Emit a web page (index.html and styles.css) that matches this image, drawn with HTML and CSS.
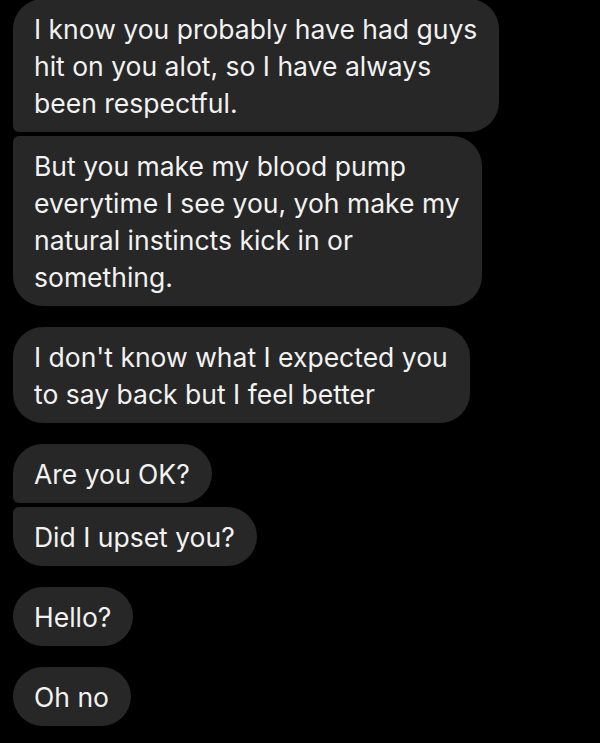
FILE: index.html
```html
<!DOCTYPE html>
<html lang="en">
<head>
    <meta charset="UTF-8">
    <meta name="viewport" content="width=device-width, initial-scale=1.0">
    <title>Messages</title>
    <link rel="stylesheet" href="styles.css">
</head>
<body>

<div class="thread">
    <div class="group first">
        <div class="bubble top">I know you probably have had guys<br>hit on you alot, so I have always<br>been respectful.</div>
        <div class="bubble bottom">But you make my blood pump<br>everytime I see you, yoh make my<br>natural instincts kick in or<br>something.</div>
    </div>

    <div class="group">
        <div class="bubble">I don't know what I expected you<br>to say back but I feel better</div>
    </div>

    <div class="group">
        <div class="bubble top">Are you OK?</div>
        <div class="bubble bottom">Did I upset you?</div>
    </div>

    <div class="group">
        <div class="bubble">Hello?</div>
    </div>

    <div class="group">
        <div class="bubble">Oh no</div>
    </div>
</div>

</body>
</html>
```

FILE: styles.css
```css
body {
    margin: 0;
    padding: 0;
    background-color: #000;
    font-family: 'Inter', 'Liberation Sans', sans-serif;
    color: #f2f2f2;
    height: 743px;
    overflow: hidden;
}

.thread {
    display: flex;
    flex-direction: column;
    gap: 21px;
    padding: 0 13px;
}

.group {
    display: flex;
    flex-direction: column;
    align-items: flex-start;
    gap: 4px;
}

.group.first {
    margin-top: -1px;
}

.bubble {
    background-color: #272727;
    font-size: 26.5px;
    line-height: 37px;
    padding: 12px 22px 10px 21px;
    border-radius: 30px;
    white-space: nowrap;
}

.bubble.top {
    border-bottom-left-radius: 6px;
}

.bubble.bottom {
    border-top-left-radius: 6px;
}
```
